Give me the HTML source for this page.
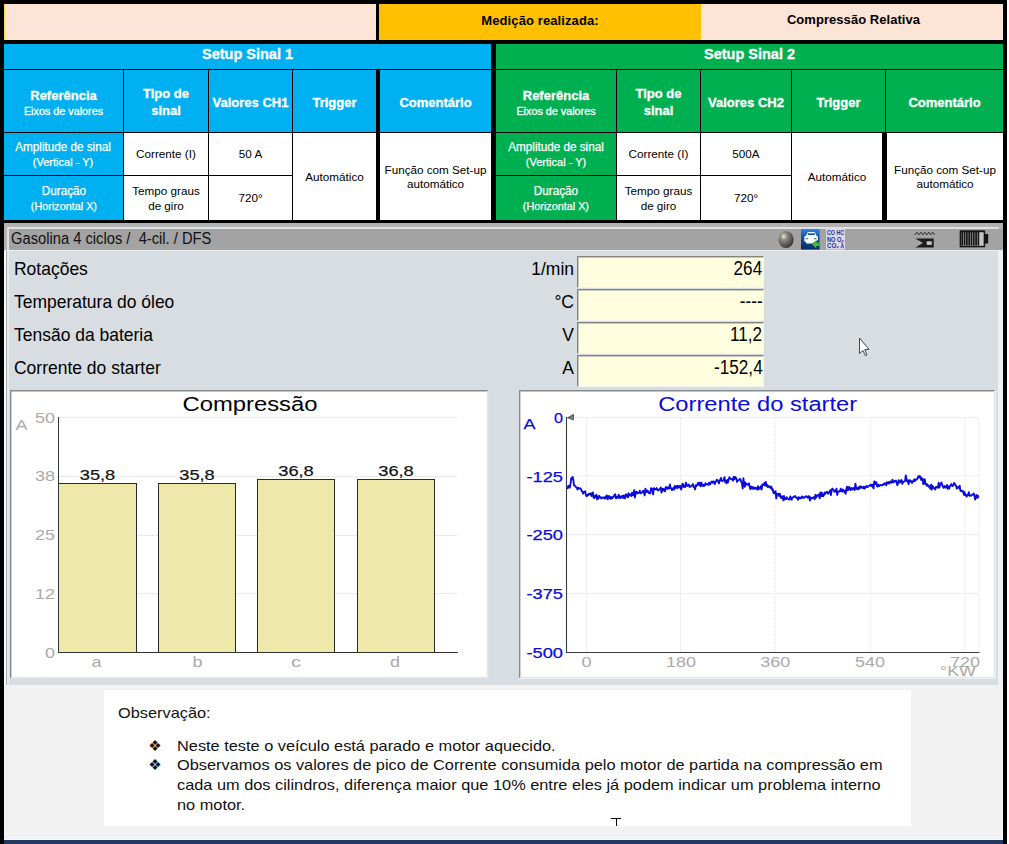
<!DOCTYPE html>
<html lang="pt-BR">
<head>
<meta charset="utf-8">
<title>Compressão Relativa</title>
<style>
html,body{margin:0;padding:0;}
body{width:1009px;height:844px;position:relative;overflow:hidden;background:#f2f2f2;font-family:"Liberation Sans",sans-serif;color:#000;}
.a{position:absolute;box-sizing:border-box;}
.k{background:#000;}
.blue{background:#00b0f0;}
.green{background:#00b050;}
.white{background:#fff;}
.cell{position:absolute;display:flex;align-items:center;justify-content:center;text-align:center;box-sizing:border-box;}
.hd{color:#fff;-webkit-text-stroke:.3px #fff;font-weight:bold;font-size:13px;line-height:16.5px;padding-top:3.5px;}
.hd small{display:block;font-weight:normal;font-size:10.8px;line-height:14px;}
.lb{color:#fff;-webkit-text-stroke:.25px #fff;font-size:12px;line-height:15px;padding-top:2px;}
.tx{color:#000;font-size:11.7px;line-height:14.5px;padding-top:1px;}
.nar{display:inline-block;transform:scaleX(.975);transform-origin:center;white-space:nowrap;}
.row{position:absolute;left:14px;font-size:19px;line-height:24px;white-space:nowrap;transform:scaleX(.92);transform-origin:left center;}
.unit{position:absolute;font-size:19px;line-height:24px;white-space:nowrap;text-align:right;width:80px;left:494px;transform:scaleX(.92);transform-origin:right center;}
.val{position:absolute;left:576.5px;width:187.5px;height:32px;background:#ffffdf;border-top:1.3px solid #84847a;border-left:1.3px solid #84847a;border-bottom:1px solid #f4f5f2;border-right:1px solid #f4f5f2;box-shadow:inset 1px 1px 0 #c9c9ba;box-sizing:border-box;font-size:19.3px;line-height:24px;text-align:right;padding-right:.5px;}
.val span{display:inline-block;transform:scaleX(.89);transform-origin:right center;}
</style>
</head>
<body>

<!-- ===== outer black frame ===== -->
<div class="a k" style="left:0;top:0;width:1007px;height:4px"></div>
<div class="a k" style="left:0;top:0;width:4px;height:844px"></div>
<div class="a k" style="left:1003px;top:0;width:4px;height:844px"></div>
<div class="a" style="left:1007px;top:0;width:2px;height:844px;background:#fff"></div>
<div class="a" style="left:4px;top:839px;width:999px;height:1px;background:#fafafa"></div>
<div class="a" style="left:4px;top:840px;width:999px;height:4px;background:#1f3864"></div>

<!-- ===== row 1 : title ===== -->
<div class="a" style="left:4px;top:4px;width:372px;height:36px;background:#fce4d6"></div>
<div class="a" style="left:4px;top:4px;width:1px;height:36px;background:#ffd45e"></div>
<div class="a k" style="left:376px;top:4px;width:3px;height:36px"></div>
<div class="cell" style="left:379px;top:4px;width:322px;height:36px;background:#ffc000;font-weight:bold;font-size:13px;letter-spacing:.1px;padding-right:0;padding-bottom:3px;">Medição realizada:</div>
<div class="cell" style="left:701px;top:4px;width:302px;height:36px;background:#fce4d6;font-weight:bold;font-size:13px;letter-spacing:.05px;padding-bottom:4.5px;padding-left:3px;">Compressão Relativa</div>
<div class="a k" style="left:0;top:40px;width:1007px;height:4px"></div>

<!-- TABLES -->
<!--T1-->
<div class="cell blue hd" style="left:4px;top:44px;width:487px;height:25px;font-size:14.5px;padding-top:0;padding-bottom:4px">Setup Sinal 1</div>
<div class="a k" style="left:4px;top:69px;width:487px;height:154px"></div>
<div class="cell blue hd" style="left:4px;top:70px;width:119px;height:62px"><div>Referência<small>Eixos de valores</small></div></div>
<div class="cell blue hd" style="left:124px;top:70px;width:84px;height:62px">Tipo de<br>sinal</div>
<div class="cell blue hd" style="left:209px;top:70px;width:83px;height:62px">Valores CH1</div>
<div class="cell blue hd" style="left:293px;top:70px;width:83px;height:62px">Trigger</div>
<div class="cell blue hd" style="left:380px;top:70px;width:111px;height:62px">Comentário</div>
<div class="cell blue lb" style="left:4px;top:133px;width:119px;height:42px"><span class="nar">Amplitude de sinal<br><span style="font-size:11.3px">(Vertical - Y)</span></span></div>
<div class="cell blue lb" style="left:4px;top:176px;width:119px;height:44px"><span class="nar">Duração<br><span style="font-size:11.1px">(Horizontal X)</span></span></div>
<div class="cell white tx" style="left:124px;top:133px;width:84px;height:42px">Corrente (I)</div>
<div class="cell white tx" style="left:124px;top:176px;width:84px;height:44px">Tempo graus<br>de giro</div>
<div class="cell white tx" style="left:209px;top:133px;width:83px;height:42px">50 A</div>
<div class="cell white tx" style="left:209px;top:176px;width:83px;height:44px">720°</div>
<div class="cell white tx" style="left:293px;top:133px;width:83px;height:87px">Automático</div>
<div class="cell white tx" style="left:380px;top:133px;width:111px;height:87px">Função com Set-up<br>automático</div>
<div class="a k" style="left:491px;top:44px;width:5px;height:179px"></div>
<div class="a k" style="left:0;top:220px;width:887px;height:3px"></div>
<div class="a white" style="left:887px;top:219px;width:116px;height:2px"></div>
<div class="a k" style="left:887px;top:221px;width:116px;height:1.5px"></div>
<!--/T1-->
<!--T2-->
<div class="cell green hd" style="left:496px;top:44px;width:507px;height:25px;font-size:14.5px;padding-top:0;padding-bottom:4px">Setup Sinal 2</div>
<div class="a k" style="left:496px;top:69px;width:507px;height:154px"></div>
<div class="cell green hd" style="left:496px;top:70px;width:120px;height:62px"><div>Referência<small>Eixos de valores</small></div></div>
<div class="cell green hd" style="left:617px;top:70px;width:83px;height:62px">Tipo de<br>sinal</div>
<div class="cell green hd" style="left:701px;top:70px;width:90px;height:62px">Valores CH2</div>
<div class="cell green hd" style="left:792px;top:70px;width:93px;height:62px">Trigger</div>
<div class="cell green hd" style="left:886px;top:70px;width:117px;height:62px">Comentário</div>
<div class="cell green lb" style="left:496px;top:133px;width:120px;height:42px"><span class="nar">Amplitude de sinal<br><span style="font-size:11.3px">(Vertical - Y)</span></span></div>
<div class="cell green lb" style="left:496px;top:176px;width:120px;height:44px"><span class="nar">Duração<br><span style="font-size:11.1px">(Horizontal X)</span></span></div>
<div class="cell white tx" style="left:617px;top:133px;width:83px;height:42px">Corrente (I)</div>
<div class="cell white tx" style="left:617px;top:176px;width:83px;height:44px">Tempo graus<br>de giro</div>
<div class="cell white tx" style="left:701px;top:133px;width:90px;height:42px">500A</div>
<div class="cell white tx" style="left:701px;top:176px;width:90px;height:44px">720°</div>
<div class="cell white tx" style="left:792px;top:133px;width:90px;height:87px">Automático</div>
<div class="cell white tx" style="left:887px;top:133px;width:116px;height:87px">Função com Set-up<br>automático</div>
<!--/T2-->

<!-- ===== instrument panel ===== -->
<!--PANEL-->
<div class="a" style="left:4px;top:222.5px;width:999px;height:28px;background:#b2b2b2"></div>
<div class="a" style="left:8.7px;top:229px;width:994.3px;height:21px;background:#a3a3a3"></div>
<div class="a" style="left:7px;top:226.5px;width:992px;height:2.5px;background:#dfe1e2"></div>
<div class="a" style="left:7px;top:226.5px;width:1.7px;height:24px;background:#dfe1e2"></div>
<div class="a" style="left:4px;top:250px;width:999px;height:435.3px;background:#d7dde1"></div>
<div class="a" style="left:4px;top:250.5px;width:2px;height:434.5px;background:#fbfcfc"></div>
<div class="a" style="left:6px;top:250.5px;width:.8px;height:434.5px;background:#a3a8ac"></div>
<div class="a" style="left:7px;top:250px;width:1.7px;height:435px;background:#e9ecee"></div>
<div class="a" style="left:998px;top:250px;width:5px;height:435.3px;background:#eef1f3"></div>
<div class="a" style="left:7px;top:250px;width:991px;height:1px;background:#eceff1"></div>
<div class="a" style="left:11px;top:228px;height:22px;line-height:22px;font-size:16px;white-space:pre;transform:scaleX(.92);transform-origin:left center;color:#111">Gasolina 4 ciclos /  4-cil. / DFS</div>
<svg class="a" style="left:770px;top:226px" width="230" height="26" viewBox="770 226 230 26">
<defs>
<radialGradient id="sph" cx="35%" cy="32%" r="70%"><stop offset="0" stop-color="#efead0"/><stop offset=".3" stop-color="#8f8d85"/><stop offset="1" stop-color="#38383a"/></radialGradient>
<linearGradient id="car" x1="0" y1="0" x2="0" y2="1"><stop offset="0" stop-color="#2a8ae0"/><stop offset=".45" stop-color="#0f4aa8"/><stop offset="1" stop-color="#082a68"/></linearGradient>
</defs>
<ellipse cx="786" cy="239.5" rx="7.6" ry="8.6" fill="url(#sph)"/>
<rect x="801" y="229" width="18.5" height="20.5" fill="url(#car)"/>
<path d="M804.3 241.5 L804.3 236.8 L806 235.8 L807.6 232.6 Q808 232 809 232 L813.6 232 Q814.6 232 815 232.6 L816.6 235.8 L818 236.8 L818 240 L812 243.5 L806.2 243.5 L806.2 242 Z" fill="#fff"/>
<rect x="807.8" y="233.3" width="7" height="1.7" fill="#1050b0"/>
<rect x="805.6" y="238" width="2.6" height="1.3" fill="#5f7fb0"/><rect x="814" y="238" width="2.6" height="1.3" fill="#5f7fb0"/>
<path d="M812 244.3 L816.3 240 L816.3 242.6 L819.5 242.6 L819.5 246 L816.3 246 L816.3 248.6 Z" fill="#3fc024"/>
<rect x="826" y="228.5" width="19" height="21" fill="#d9d9e6"/>
<g font-family="Liberation Sans, sans-serif" font-size="6.4" font-weight="bold" fill="#2a2a9c">
<text x="827" y="235.2" textLength="17" lengthAdjust="spacingAndGlyphs">CO HC</text>
<text x="827" y="241.8" textLength="17" lengthAdjust="spacingAndGlyphs">NO O₂</text>
<text x="827" y="248.4" textLength="17" lengthAdjust="spacingAndGlyphs">CO₂ λ</text>
</g>
<path d="M914.8 234.8 l2 -2.6 l2 2.6 l2 -2.6 l2 2.6 l2 -2.6 l2 2.6 l2 -2.6 l2 2.6 l2 -2.6 l1.8 2.6" stroke="#2a2a2a" stroke-width="1" fill="none"/>
<path d="M915.3 238.4 L933.7 238.4 L933.7 247.5 L915.3 247.5 L923 243 Z M926.8 241.4 L926.8 244.7 L931.6 244.7 L931.6 241.4 Z" fill="#1c1c1c" fill-rule="evenodd"/>
<rect x="926.8" y="241.4" width="4.8" height="3.3" fill="#c9c9c9"/>
<rect x="960.4" y="231.4" width="24" height="15.2" fill="#c4c4c4" stroke="#141414" stroke-width="1.5"/>
<rect x="960" y="230.5" width="24.8" height="1.6" fill="#141414"/>
<g fill="#141414"><rect x="961.4" y="232" width="1.75" height="13.6"/><rect x="963.7" y="232" width="1.75" height="13.6"/><rect x="966" y="232" width="1.75" height="13.6"/><rect x="968.3" y="232" width="1.75" height="13.6"/><rect x="970.6" y="232" width="1.75" height="13.6"/><rect x="972.9" y="232" width="1.75" height="13.6"/><rect x="975.2" y="232" width="1.75" height="13.6"/><rect x="977.5" y="232" width="1.75" height="13.6"/>
<rect x="985" y="234" width="3.2" height="9.5"/></g>
</svg>
<div class="row" style="top:257.20px">Rotações</div>
<div class="unit" style="top:257.20px">1/min</div>
<div class="val" style="top:256px"><span>264</span></div>
<div class="row" style="top:290.05px">Temperatura do óleo</div>
<div class="unit" style="top:290.05px">°C</div>
<div class="val" style="top:289px"><span>----</span></div>
<div class="row" style="top:322.90px">Tensão da bateria</div>
<div class="unit" style="top:322.90px">V</div>
<div class="val" style="top:322px"><span>11,2</span></div>
<div class="row" style="top:355.75px">Corrente do starter</div>
<div class="unit" style="top:355.75px">A</div>
<div class="val" style="top:355px"><span>-152,4</span></div>
<svg class="a" style="left:857.8px;top:337.1px" width="14" height="21" viewBox="0 0 14 21"><path d="M1.5 1 L1.5 16.5 L4.9 13.4 L7.4 18.7 L9 18 L6.7 12.7 L11 12.4 Z" fill="#fff" stroke="#30363a" stroke-width=".9" stroke-linejoin="round"/></svg>
<svg class="a" style="left:10px;top:390px" width="479" height="289" viewBox="10 390 479 289" font-family="Liberation Sans, sans-serif">
<rect x="10" y="390" width="478" height="288" fill="#f1f4f6"/>
<rect x="10.5" y="390.5" width="477" height="287" fill="#fff" stroke="#9aa0a4" stroke-width="1"/>
<path d="M10.7 677.5 V390.8 H487.5" fill="none" stroke="#858a8e" stroke-width="1.4"/>
<path d="M11 677.5 H487.5 V391" fill="none" stroke="#e3e7ea" stroke-width="1.5"/>
<line x1="59" y1="417.5" x2="457" y2="417.5" stroke="#e4e4e4" stroke-width="1" stroke-dasharray="3 1"/>
<line x1="59" y1="476.5" x2="457" y2="476.5" stroke="#e4e4e4" stroke-width="1" stroke-dasharray="3 1"/>
<line x1="59" y1="535.5" x2="457" y2="535.5" stroke="#e4e4e4" stroke-width="1" stroke-dasharray="3 1"/>
<line x1="59" y1="593.5" x2="457" y2="593.5" stroke="#e4e4e4" stroke-width="1" stroke-dasharray="3 1"/>
<rect x="58.5" y="483.5" width="78.0" height="169.0" fill="#efe8ab" stroke="#2a2a2a" stroke-width="1"/>
<text x="97.5" y="480.2" font-size="14.5" text-anchor="middle" textLength="35.5" lengthAdjust="spacingAndGlyphs" fill="#111" stroke="#111" stroke-width=".2">35,8</text>
<rect x="158.5" y="483.5" width="77.0" height="169.0" fill="#efe8ab" stroke="#2a2a2a" stroke-width="1"/>
<text x="197.0" y="480.2" font-size="14.5" text-anchor="middle" textLength="35.5" lengthAdjust="spacingAndGlyphs" fill="#111" stroke="#111" stroke-width=".2">35,8</text>
<rect x="257.5" y="479.5" width="77.0" height="173.0" fill="#efe8ab" stroke="#2a2a2a" stroke-width="1"/>
<text x="296.0" y="476.2" font-size="14.5" text-anchor="middle" textLength="35.5" lengthAdjust="spacingAndGlyphs" fill="#111" stroke="#111" stroke-width=".2">36,8</text>
<rect x="357.5" y="479.5" width="77.0" height="173.0" fill="#efe8ab" stroke="#2a2a2a" stroke-width="1"/>
<text x="396.0" y="476.2" font-size="14.5" text-anchor="middle" textLength="35.5" lengthAdjust="spacingAndGlyphs" fill="#111" stroke="#111" stroke-width=".2">36,8</text>
<path d="M58.5 417 V652.5 H458" fill="none" stroke="#333" stroke-width="1"/>
<text x="55" y="422.9" font-size="15" text-anchor="end" textLength="20" lengthAdjust="spacingAndGlyphs" fill="#a9a9a9">50</text>
<text x="55" y="481.3" font-size="15" text-anchor="end" textLength="20" lengthAdjust="spacingAndGlyphs" fill="#a9a9a9">38</text>
<text x="55" y="540.1" font-size="15" text-anchor="end" textLength="20" lengthAdjust="spacingAndGlyphs" fill="#a9a9a9">25</text>
<text x="55" y="598.8" font-size="15" text-anchor="end" textLength="20" lengthAdjust="spacingAndGlyphs" fill="#a9a9a9">12</text>
<text x="55" y="658.0" font-size="15" text-anchor="end" textLength="10" lengthAdjust="spacingAndGlyphs" fill="#a9a9a9">0</text>
<text x="15.5" y="429.5" font-size="15" textLength="12" lengthAdjust="spacingAndGlyphs" fill="#a9a9a9">A</text>
<text x="96.5" y="667" font-size="15" text-anchor="middle" textLength="10" lengthAdjust="spacingAndGlyphs" fill="#a9a9a9">a</text>
<text x="197.5" y="667" font-size="15" text-anchor="middle" textLength="10" lengthAdjust="spacingAndGlyphs" fill="#a9a9a9">b</text>
<text x="296" y="667" font-size="15" text-anchor="middle" textLength="10" lengthAdjust="spacingAndGlyphs" fill="#a9a9a9">c</text>
<text x="395" y="667" font-size="15" text-anchor="middle" textLength="10" lengthAdjust="spacingAndGlyphs" fill="#a9a9a9">d</text>
<text x="250" y="411" font-size="19.5" text-anchor="middle" textLength="135" lengthAdjust="spacingAndGlyphs" fill="#000">Compressão</text>
</svg>
<svg class="a" style="left:519px;top:390px" width="479" height="290" viewBox="519 390 479 290" font-family="Liberation Sans, sans-serif">
<rect x="519" y="390" width="477" height="289" fill="#f1f4f6"/>
<rect x="519.5" y="390.5" width="475" height="287" fill="#fff" stroke="#9aa0a4" stroke-width="1"/>
<path d="M519.7 677.5 V390.8 H994.5" fill="none" stroke="#858a8e" stroke-width="1.4"/>
<path d="M520 677.5 H994.5 V391" fill="none" stroke="#e3e7ea" stroke-width="1.5"/>
<line x1="567" y1="417.5" x2="979" y2="417.5" stroke="#e8e8e8" stroke-width="1" stroke-dasharray="3 1"/>
<line x1="567" y1="475.8" x2="979" y2="475.8" stroke="#e8e8e8" stroke-width="1" stroke-dasharray="3 1"/>
<line x1="567" y1="534.5" x2="979" y2="534.5" stroke="#e8e8e8" stroke-width="1" stroke-dasharray="3 1"/>
<line x1="567" y1="593.5" x2="979" y2="593.5" stroke="#e8e8e8" stroke-width="1" stroke-dasharray="3 1"/>
<line x1="586.5" y1="417.5" x2="586.5" y2="652" stroke="#eaeaea" stroke-width="1" stroke-dasharray="3 1"/>
<line x1="680.5" y1="417.5" x2="680.5" y2="652" stroke="#eaeaea" stroke-width="1" stroke-dasharray="3 1"/>
<line x1="775" y1="417.5" x2="775" y2="652" stroke="#eaeaea" stroke-width="1" stroke-dasharray="3 1"/>
<line x1="870.5" y1="417.5" x2="870.5" y2="652" stroke="#eaeaea" stroke-width="1" stroke-dasharray="3 1"/>
<line x1="965" y1="417.5" x2="965" y2="652" stroke="#eaeaea" stroke-width="1" stroke-dasharray="3 1"/>
<line x1="979" y1="417.5" x2="979" y2="652" stroke="#eaeaea" stroke-width="1" stroke-dasharray="3 1"/>
<path d="M566.5 417 V652.5 H979.5" fill="none" stroke="#3a3a3a" stroke-width="1.1"/>
<path d="M567.5 417.8 L573.5 414.3 L573.5 420 Z" fill="#777" stroke="#222" stroke-width=".6"/>
<polyline points="567.0,487.6 567.7,488.3 568.4,485.7 569.1,486.3 569.8,487.6 570.5,484.1 571.2,478.2 571.9,478.7 572.6,476.9 573.3,479.7 574.0,485.4 574.7,485.5 575.4,486.5 576.1,487.1 576.8,487.9 577.5,489.4 578.2,487.7 578.9,488.5 579.6,488.6 580.3,488.3 581.0,489.1 581.7,491.1 582.4,491.4 583.1,493.7 583.8,492.2 584.5,491.7 585.2,491.3 585.9,495.1 586.6,496.3 587.3,494.9 588.0,495.5 588.7,493.9 589.4,493.6 590.1,494.5 590.8,493.4 591.5,496.0 592.2,493.2 592.9,492.5 593.6,497.6 594.3,498.0 595.0,495.8 595.7,497.0 596.4,494.6 597.1,499.4 597.8,496.7 598.5,498.5 599.2,495.8 599.9,497.2 600.6,497.1 601.3,498.5 602.0,497.6 602.7,497.5 603.4,497.5 604.1,498.4 604.8,497.2 605.5,498.2 606.2,496.1 606.9,495.4 607.6,499.4 608.3,496.6 609.0,495.9 609.7,498.2 610.4,498.7 611.1,496.9 611.8,498.5 612.5,498.1 613.2,496.6 613.9,496.6 614.6,494.6 615.3,494.3 616.0,498.3 616.7,498.1 617.4,496.7 618.1,497.7 618.8,494.8 619.5,497.3 620.2,498.3 620.9,496.6 621.6,497.1 622.3,495.8 623.0,498.0 623.7,495.4 624.4,497.0 625.1,498.3 625.8,494.4 626.5,494.5 627.2,496.1 627.9,497.3 628.6,493.3 629.3,495.6 630.0,494.4 630.7,495.4 631.4,495.9 632.1,492.7 632.8,495.3 633.5,494.9 634.2,490.2 634.9,497.5 635.6,492.3 636.3,491.7 637.0,493.5 637.7,492.6 638.4,493.0 639.1,492.7 639.8,490.7 640.5,493.4 641.2,493.1 641.9,492.6 642.6,491.4 643.3,490.7 644.0,493.0 644.7,495.4 645.4,488.6 646.1,491.2 646.8,492.1 647.5,490.6 648.2,491.5 648.9,493.1 649.6,493.2 650.3,493.3 651.0,488.1 651.7,489.1 652.4,488.7 653.1,494.3 653.8,488.3 654.5,488.5 655.2,489.4 655.9,489.4 656.6,488.1 657.3,489.4 658.0,490.5 658.7,489.8 659.4,489.1 660.1,489.4 660.8,487.4 661.5,492.6 662.2,488.7 662.9,490.6 663.6,488.8 664.3,490.5 665.0,491.3 665.7,487.1 666.4,487.2 667.1,489.0 667.8,487.3 668.5,488.5 669.2,488.6 669.9,484.5 670.6,487.8 671.3,488.5 672.0,490.1 672.7,489.2 673.4,487.8 674.1,489.6 674.8,486.0 675.5,487.8 676.2,486.2 676.9,488.3 677.6,485.6 678.3,486.6 679.0,487.6 679.7,486.0 680.4,486.0 681.1,489.5 681.8,487.5 682.5,483.6 683.2,484.6 683.9,487.0 684.6,485.4 685.3,486.9 686.0,482.7 686.7,485.0 687.4,485.9 688.1,485.1 688.8,484.5 689.5,486.9 690.2,486.5 690.9,486.5 691.6,485.4 692.3,485.4 693.0,484.1 693.7,487.2 694.4,487.5 695.1,489.3 695.8,485.2 696.5,486.0 697.2,485.1 697.9,483.0 698.6,482.9 699.3,485.3 700.0,482.6 700.7,486.3 701.4,482.8 702.1,484.6 702.8,485.9 703.5,484.7 704.2,486.0 704.9,484.9 705.6,483.2 706.3,484.4 707.0,484.1 707.7,484.4 708.4,484.8 709.1,482.6 709.8,484.5 710.5,483.9 711.2,482.0 711.9,481.6 712.6,482.7 713.3,481.5 714.0,481.5 714.7,484.0 715.4,482.4 716.1,481.2 716.8,479.7 717.5,480.2 718.2,481.1 718.9,483.4 719.6,480.9 720.3,479.5 721.0,477.9 721.7,480.9 722.4,481.0 723.1,480.5 723.8,479.8 724.5,477.1 725.2,482.4 725.9,480.8 726.6,483.3 727.3,480.0 728.0,482.3 728.7,479.5 729.4,477.2 730.1,478.6 730.8,478.9 731.5,479.3 732.2,479.2 732.9,480.6 733.6,476.9 734.3,479.3 735.0,477.0 735.7,477.5 736.4,479.1 737.1,481.9 737.8,480.4 738.5,480.3 739.2,479.8 739.9,478.9 740.6,479.8 741.3,482.1 742.0,483.4 742.7,488.6 743.4,478.3 744.1,483.2 744.8,486.7 745.5,482.5 746.2,484.6 746.9,483.9 747.6,484.6 748.3,485.0 749.0,483.3 749.7,486.7 750.4,489.2 751.1,486.8 751.8,486.7 752.5,488.6 753.2,487.3 753.9,488.9 754.6,487.7 755.3,487.8 756.0,488.8 756.7,488.0 757.4,489.5 758.1,486.1 758.8,489.2 759.5,487.7 760.2,488.4 760.9,486.3 761.6,489.5 762.3,484.4 763.0,484.6 763.7,484.8 764.4,483.1 765.1,485.6 765.8,481.9 766.5,485.8 767.2,485.0 767.9,487.1 768.6,486.2 769.3,486.3 770.0,487.6 770.7,488.0 771.4,486.6 772.1,489.9 772.8,489.3 773.5,493.2 774.2,491.8 774.9,493.3 775.6,491.2 776.3,498.5 777.0,494.2 777.7,493.8 778.4,493.6 779.1,496.1 779.8,493.8 780.5,496.2 781.2,498.1 781.9,496.4 782.6,496.5 783.3,500.3 784.0,495.9 784.7,499.6 785.4,498.2 786.1,499.0 786.8,497.3 787.5,498.6 788.2,498.9 788.9,499.5 789.6,499.6 790.3,496.5 791.0,498.0 791.7,499.7 792.4,497.6 793.1,497.3 793.8,496.7 794.5,496.4 795.2,496.1 795.9,497.6 796.6,497.7 797.3,497.7 798.0,499.7 798.7,497.1 799.4,497.7 800.1,498.6 800.8,497.4 801.5,497.7 802.2,496.4 802.9,497.9 803.6,497.4 804.3,497.7 805.0,496.9 805.7,496.4 806.4,496.3 807.1,497.2 807.8,497.7 808.5,496.2 809.2,496.2 809.9,500.6 810.6,497.4 811.3,498.6 812.0,498.0 812.7,498.2 813.4,497.3 814.1,497.3 814.8,499.2 815.5,494.7 816.2,497.5 816.9,495.6 817.6,495.9 818.3,495.3 819.0,494.5 819.7,498.3 820.4,492.4 821.1,496.2 821.8,492.8 822.5,496.0 823.2,496.1 823.9,495.1 824.6,492.5 825.3,493.9 826.0,492.5 826.7,492.2 827.4,491.7 828.1,493.7 828.8,492.6 829.5,492.6 830.2,490.1 830.9,495.0 831.6,490.6 832.3,488.6 833.0,489.4 833.7,490.0 834.4,491.7 835.1,490.7 835.8,491.6 836.5,488.6 837.2,494.9 837.9,492.2 838.6,491.5 839.3,491.6 840.0,491.1 840.7,488.7 841.4,491.3 842.1,491.6 842.8,489.5 843.5,490.0 844.2,491.9 844.9,490.9 845.6,493.8 846.3,489.5 847.0,486.7 847.7,490.2 848.4,489.7 849.1,486.8 849.8,488.9 850.5,490.1 851.2,488.0 851.9,489.1 852.6,489.4 853.3,488.0 854.0,488.4 854.7,490.0 855.4,483.6 856.1,488.0 856.8,489.0 857.5,488.0 858.2,489.5 858.9,487.1 859.6,488.4 860.3,486.1 861.0,487.8 861.7,486.8 862.4,487.2 863.1,488.2 863.8,486.7 864.5,488.6 865.2,487.8 865.9,486.5 866.6,485.9 867.3,487.1 868.0,486.7 868.7,486.2 869.4,485.4 870.1,485.3 870.8,484.6 871.5,486.2 872.2,484.7 872.9,487.1 873.6,488.4 874.3,481.4 875.0,481.8 875.7,483.9 876.4,482.3 877.1,486.4 877.8,486.5 878.5,484.7 879.2,486.2 879.9,485.4 880.6,485.0 881.3,485.1 882.0,485.4 882.7,485.0 883.4,484.1 884.1,484.5 884.8,483.2 885.5,483.6 886.2,485.2 886.9,482.3 887.6,483.5 888.3,482.2 889.0,483.6 889.7,482.2 890.4,481.5 891.1,482.7 891.8,482.3 892.5,479.6 893.2,482.6 893.9,482.1 894.6,480.9 895.3,481.3 896.0,480.6 896.7,483.1 897.4,485.2 898.1,482.6 898.8,480.1 899.5,482.6 900.2,482.4 900.9,480.5 901.6,480.0 902.3,483.7 903.0,482.4 903.7,481.8 904.4,481.4 905.1,480.9 905.8,475.4 906.5,479.2 907.2,481.6 907.9,480.3 908.6,484.2 909.3,480.2 910.0,481.5 910.7,480.5 911.4,482.2 912.1,482.9 912.8,481.1 913.5,481.2 914.2,479.5 914.9,481.1 915.6,479.5 916.3,479.7 917.0,479.4 917.7,477.9 918.4,476.2 919.1,477.6 919.8,476.0 920.5,476.9 921.2,480.0 921.9,478.4 922.6,478.7 923.3,484.1 924.0,480.3 924.7,479.2 925.4,484.2 926.1,483.4 926.8,485.6 927.5,484.5 928.2,486.1 928.9,486.8 929.6,486.3 930.3,488.6 931.0,484.6 931.7,489.7 932.4,485.7 933.1,487.1 933.8,488.1 934.5,488.1 935.2,489.5 935.9,487.0 936.6,487.4 937.3,486.8 938.0,487.8 938.7,482.7 939.4,487.6 940.1,484.8 940.8,484.3 941.5,482.4 942.2,485.1 942.9,486.5 943.6,487.7 944.3,486.0 945.0,486.5 945.7,487.7 946.4,486.2 947.1,485.0 947.8,488.7 948.5,486.7 949.2,488.6 949.9,485.9 950.6,485.6 951.3,484.1 952.0,485.7 952.7,486.1 953.4,484.7 954.1,483.0 954.8,484.1 955.5,485.2 956.2,486.0 956.9,488.7 957.6,487.3 958.3,487.4 959.0,487.9 959.7,485.6 960.4,491.0 961.1,490.3 961.8,490.7 962.5,491.6 963.2,491.3 963.9,494.7 964.6,492.1 965.3,495.3 966.0,495.0 966.7,496.6 967.4,494.9 968.1,495.1 968.8,492.2 969.5,495.7 970.2,495.7 970.9,495.5 971.6,495.5 972.3,494.6 973.0,494.3 973.7,493.5 974.4,495.5 975.1,499.6 975.8,496.9 976.5,495.1 977.2,497.9 977.9,495.6 978.6,497.8" fill="none" stroke="#0b0bdc" stroke-width="1.9" stroke-linejoin="round"/>
<text x="563" y="422.8" font-size="15" text-anchor="end" textLength="9" lengthAdjust="spacingAndGlyphs" fill="#0b0bdc" stroke="#0b0bdc" stroke-width=".25">0</text>
<text x="563" y="481.8" font-size="15" text-anchor="end" textLength="36.5" lengthAdjust="spacingAndGlyphs" fill="#0b0bdc" stroke="#0b0bdc" stroke-width=".25">-125</text>
<text x="563" y="539.8" font-size="15" text-anchor="end" textLength="36.5" lengthAdjust="spacingAndGlyphs" fill="#0b0bdc" stroke="#0b0bdc" stroke-width=".25">-250</text>
<text x="563" y="598.8" font-size="15" text-anchor="end" textLength="36.5" lengthAdjust="spacingAndGlyphs" fill="#0b0bdc" stroke="#0b0bdc" stroke-width=".25">-375</text>
<text x="563" y="657.8" font-size="15" text-anchor="end" textLength="36.5" lengthAdjust="spacingAndGlyphs" fill="#0b0bdc" stroke="#0b0bdc" stroke-width=".25">-500</text>
<text x="523.5" y="428.5" font-size="15" textLength="12" lengthAdjust="spacingAndGlyphs" fill="#0b0bdc" stroke="#0b0bdc" stroke-width=".25">A</text>
<text x="586.5" y="666.7" font-size="15" text-anchor="middle" textLength="10" lengthAdjust="spacingAndGlyphs" fill="#a9a9a9">0</text>
<text x="681" y="666.7" font-size="15" text-anchor="middle" textLength="30" lengthAdjust="spacingAndGlyphs" fill="#a9a9a9">180</text>
<text x="775.3" y="666.7" font-size="15" text-anchor="middle" textLength="30" lengthAdjust="spacingAndGlyphs" fill="#a9a9a9">360</text>
<text x="870" y="666.7" font-size="15" text-anchor="middle" textLength="30" lengthAdjust="spacingAndGlyphs" fill="#a9a9a9">540</text>
<text x="965" y="666.7" font-size="15" text-anchor="middle" textLength="30" lengthAdjust="spacingAndGlyphs" fill="#a9a9a9">720</text>
<text x="940" y="675.5" font-size="15" textLength="36" lengthAdjust="spacingAndGlyphs" fill="#a9a9a9">°KW</text>
<text x="757.7" y="411" font-size="19.5" text-anchor="middle" textLength="199" lengthAdjust="spacingAndGlyphs" fill="#0b0bdc">Corrente do starter</text>
</svg>
<!--/PANEL-->

<!-- ===== observation ===== -->
<!--OBS-->
<div class="a" style="left:104px;top:690px;width:807px;height:136px;background:#fff"></div>
<div style="position:absolute;white-space:nowrap;font-size:15px;line-height:20px;transform:scaleX(1.089);transform-origin:left center;color:#111;left:117.7px;top:703px">Observação:</div>
<div style="position:absolute;white-space:nowrap;font-size:15px;line-height:20px;transform:scaleX(1.089);transform-origin:left center;color:#111;left:177.3px;top:735.5px">Neste teste o veículo está parado e motor aquecido.</div>
<div style="position:absolute;white-space:nowrap;font-size:15px;line-height:20px;transform:scaleX(1.089);transform-origin:left center;color:#111;left:177.3px;top:755.3px">Observamos os valores de pico de Corrente consumida pelo motor de partida na compressão em</div>
<div style="position:absolute;white-space:nowrap;font-size:15px;line-height:20px;transform:scaleX(1.089);transform-origin:left center;color:#111;left:177.3px;top:775.2px">cada um dos cilindros, diferença maior que 10% entre eles já podem indicar um problema interno</div>
<div style="position:absolute;white-space:nowrap;font-size:15px;line-height:20px;transform:scaleX(1.089);transform-origin:left center;color:#111;left:177.3px;top:794.8px">no motor.</div>
<div style="position:absolute;left:148px;top:735.5px;width:14px;text-align:center;font-size:15px;line-height:20px;font-family:'DejaVu Sans',sans-serif;color:#111">❖</div>
<div style="position:absolute;left:148px;top:755.3px;width:14px;text-align:center;font-size:15px;line-height:20px;font-family:'DejaVu Sans',sans-serif;color:#111">❖</div>
<div class="a k" style="left:611px;top:818px;width:10px;height:1px"></div>
<div class="a k" style="left:615.5px;top:818px;width:1px;height:8px"></div>
<!--/OBS-->

</body>
</html>
